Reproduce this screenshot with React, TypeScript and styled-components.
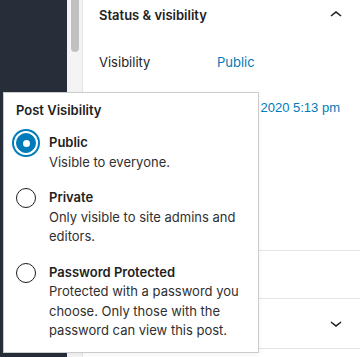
import React from "react";
import styled, { createGlobalStyle } from "styled-components";

const GlobalStyle = createGlobalStyle`
  html, body {
    margin: 0;
    padding: 0;
    height: 100%;
    overflow: hidden;
    background: #fff;
  }
  body {
    font-family: Inter, "Noto Sans", "Liberation Sans", sans-serif;
    font-size: 13px;
    color: #1e1e1e;
  }
`;

const Screen = styled.div`
  position: relative;
  display: flex;
  height: 357px;
  width: 360px;
  overflow: hidden;
`;

const Sidebar = styled.div`
  width: 67px;
  flex-shrink: 0;
  background: #272e3a;
`;

const ScrollTrack = styled.div`
  width: 15px;
  flex-shrink: 0;
  background: #f4f4f4;
  display: flex;
  justify-content: center;
`;

const ScrollThumb = styled.div`
  width: 8px;
  height: 52px;
  background: #c1c1c1;
  border-radius: 0 0 4px 4px;
  margin-left: 1px;
`;

const Panel = styled.div`
  flex: 1;
  border-left: 1px solid #e2e4e7;
  display: flex;
  flex-direction: column;
`;

const Section = styled.section<{ $height: number }>`
  border-bottom: 1px solid #e2e4e7;
  height: ${(p) => p.$height}px;
  display: flex;
  flex-direction: column;
  flex-shrink: 0;
`;

const SectionHeader = styled.div<{ $height: number }>`
  height: ${(p) => p.$height}px;
  display: flex;
  align-items: center;
  justify-content: space-between;
  padding: 0 12px 0 16px;
  font-weight: 600;
  line-height: 20px;
`;

const SectionBody = styled.div`
  padding: 17px 16px 0;
  display: flex;
  flex-direction: column;
  gap: 15px;
`;

const Row = styled.div`
  display: grid;
  grid-template-columns: 118px 1fr;
  height: 30px;
  align-items: center;
  white-space: nowrap;
`;

const Value = styled.span`
  color: #007cba;
  justify-self: start;
`;

const DateValue = styled(Value)`
  justify-self: end;
  padding-right: 4px;
  font-family: "Liberation Sans", Arial, sans-serif;
`;

const Popover = styled.div`
  position: absolute;
  left: 3px;
  top: 92px;
  width: 230px;
  box-sizing: content-box;
  background: #fff;
  border: 1px solid #cccccc;
  box-shadow: 0 2px 6px rgba(0, 0, 0, 0.05);
  padding: 8px 12px 11px;
  line-height: 19.5px;
`;

const PopoverTitle = styled.div`
  font-weight: 600;
  margin-bottom: 12.5px;
`;

const Options = styled.div`
  display: flex;
  flex-direction: column;
  gap: 16px;
`;

const Option = styled.label`
  display: flex;
  align-items: flex-start;
  gap: 13px;
`;

const Radio = styled.span<{ $checked?: boolean }>`
  position: relative;
  width: 20px;
  height: 20px;
  flex-shrink: 0;
  box-sizing: border-box;
  border-radius: 50%;
  border: 1px solid ${(p) => (p.$checked ? "#007cba" : "#1e1e1e")};
  background: ${(p) => (p.$checked ? "#007cba" : "#fff")};
  box-shadow: ${(p) =>
    p.$checked ? "0 0 0 2px #fff, 0 0 0 4px #007cba" : "none"};

  &::after {
    content: "";
    display: ${(p) => (p.$checked ? "block" : "none")};
    position: absolute;
    left: 50%;
    top: 50%;
    width: 7px;
    height: 7px;
    margin: -3.5px 0 0 -3.5px;
    border-radius: 50%;
    background: #fff;
  }
`;

const OptionText = styled.div`
  display: flex;
  flex-direction: column;
`;

const OptionLabel = styled.span`
  font-weight: 600;
`;

const OptionDesc = styled.span`
  color: #2f2f2f;
`;

const Chevron = ({ up }: { up?: boolean }) => (
  <svg width="24" height="24" viewBox="0 0 24 24" fill="#1e1e1e">
    {up ? (
      <path d="M6.5 12.4L12 8l5.5 4.4-.9 1.2L12 10l-4.6 3.6-.9-1.2z" />
    ) : (
      <path d="M17.5 11.6L12 16l-5.5-4.4.9-1.2L12 14l4.6-3.6.9 1.2z" />
    )}
  </svg>
);

const options = [
  { label: "Public", desc: "Visible to everyone.", checked: true },
  { label: "Private", desc: "Only visible to site admins and editors." },
  {
    label: "Password Protected",
    desc: "Protected with a password you choose. Only those with the password can view this post.",
  },
];

export default function App() {
  return (
    <>
      <GlobalStyle />
      <Screen>
        <Sidebar />
        <ScrollTrack>
          <ScrollThumb />
        </ScrollTrack>
        <Panel>
          <Section $height={250}>
            <SectionHeader $height={30}>
              <span>Status &amp; visibility</span>
              <Chevron up />
            </SectionHeader>
            <SectionBody>
              <Row>
                <span>Visibility</span>
                <Value>Public</Value>
              </Row>
              <Row>
                <span />
                <DateValue>2020 5:13 pm</DateValue>
              </Row>
            </SectionBody>
          </Section>
          <Section $height={47} />
          <Section $height={49}>
            <SectionHeader $height={48}>
              <span />
              <Chevron />
            </SectionHeader>
          </Section>
          <Section $height={49} />
        </Panel>

        <Popover>
          <PopoverTitle>Post Visibility</PopoverTitle>
          <Options>
            {options.map((o) => (
              <Option key={o.label}>
                <Radio $checked={o.checked} />
                <OptionText>
                  <OptionLabel>{o.label}</OptionLabel>
                  <OptionDesc>{o.desc}</OptionDesc>
                </OptionText>
              </Option>
            ))}
          </Options>
        </Popover>
      </Screen>
    </>
  );
}
